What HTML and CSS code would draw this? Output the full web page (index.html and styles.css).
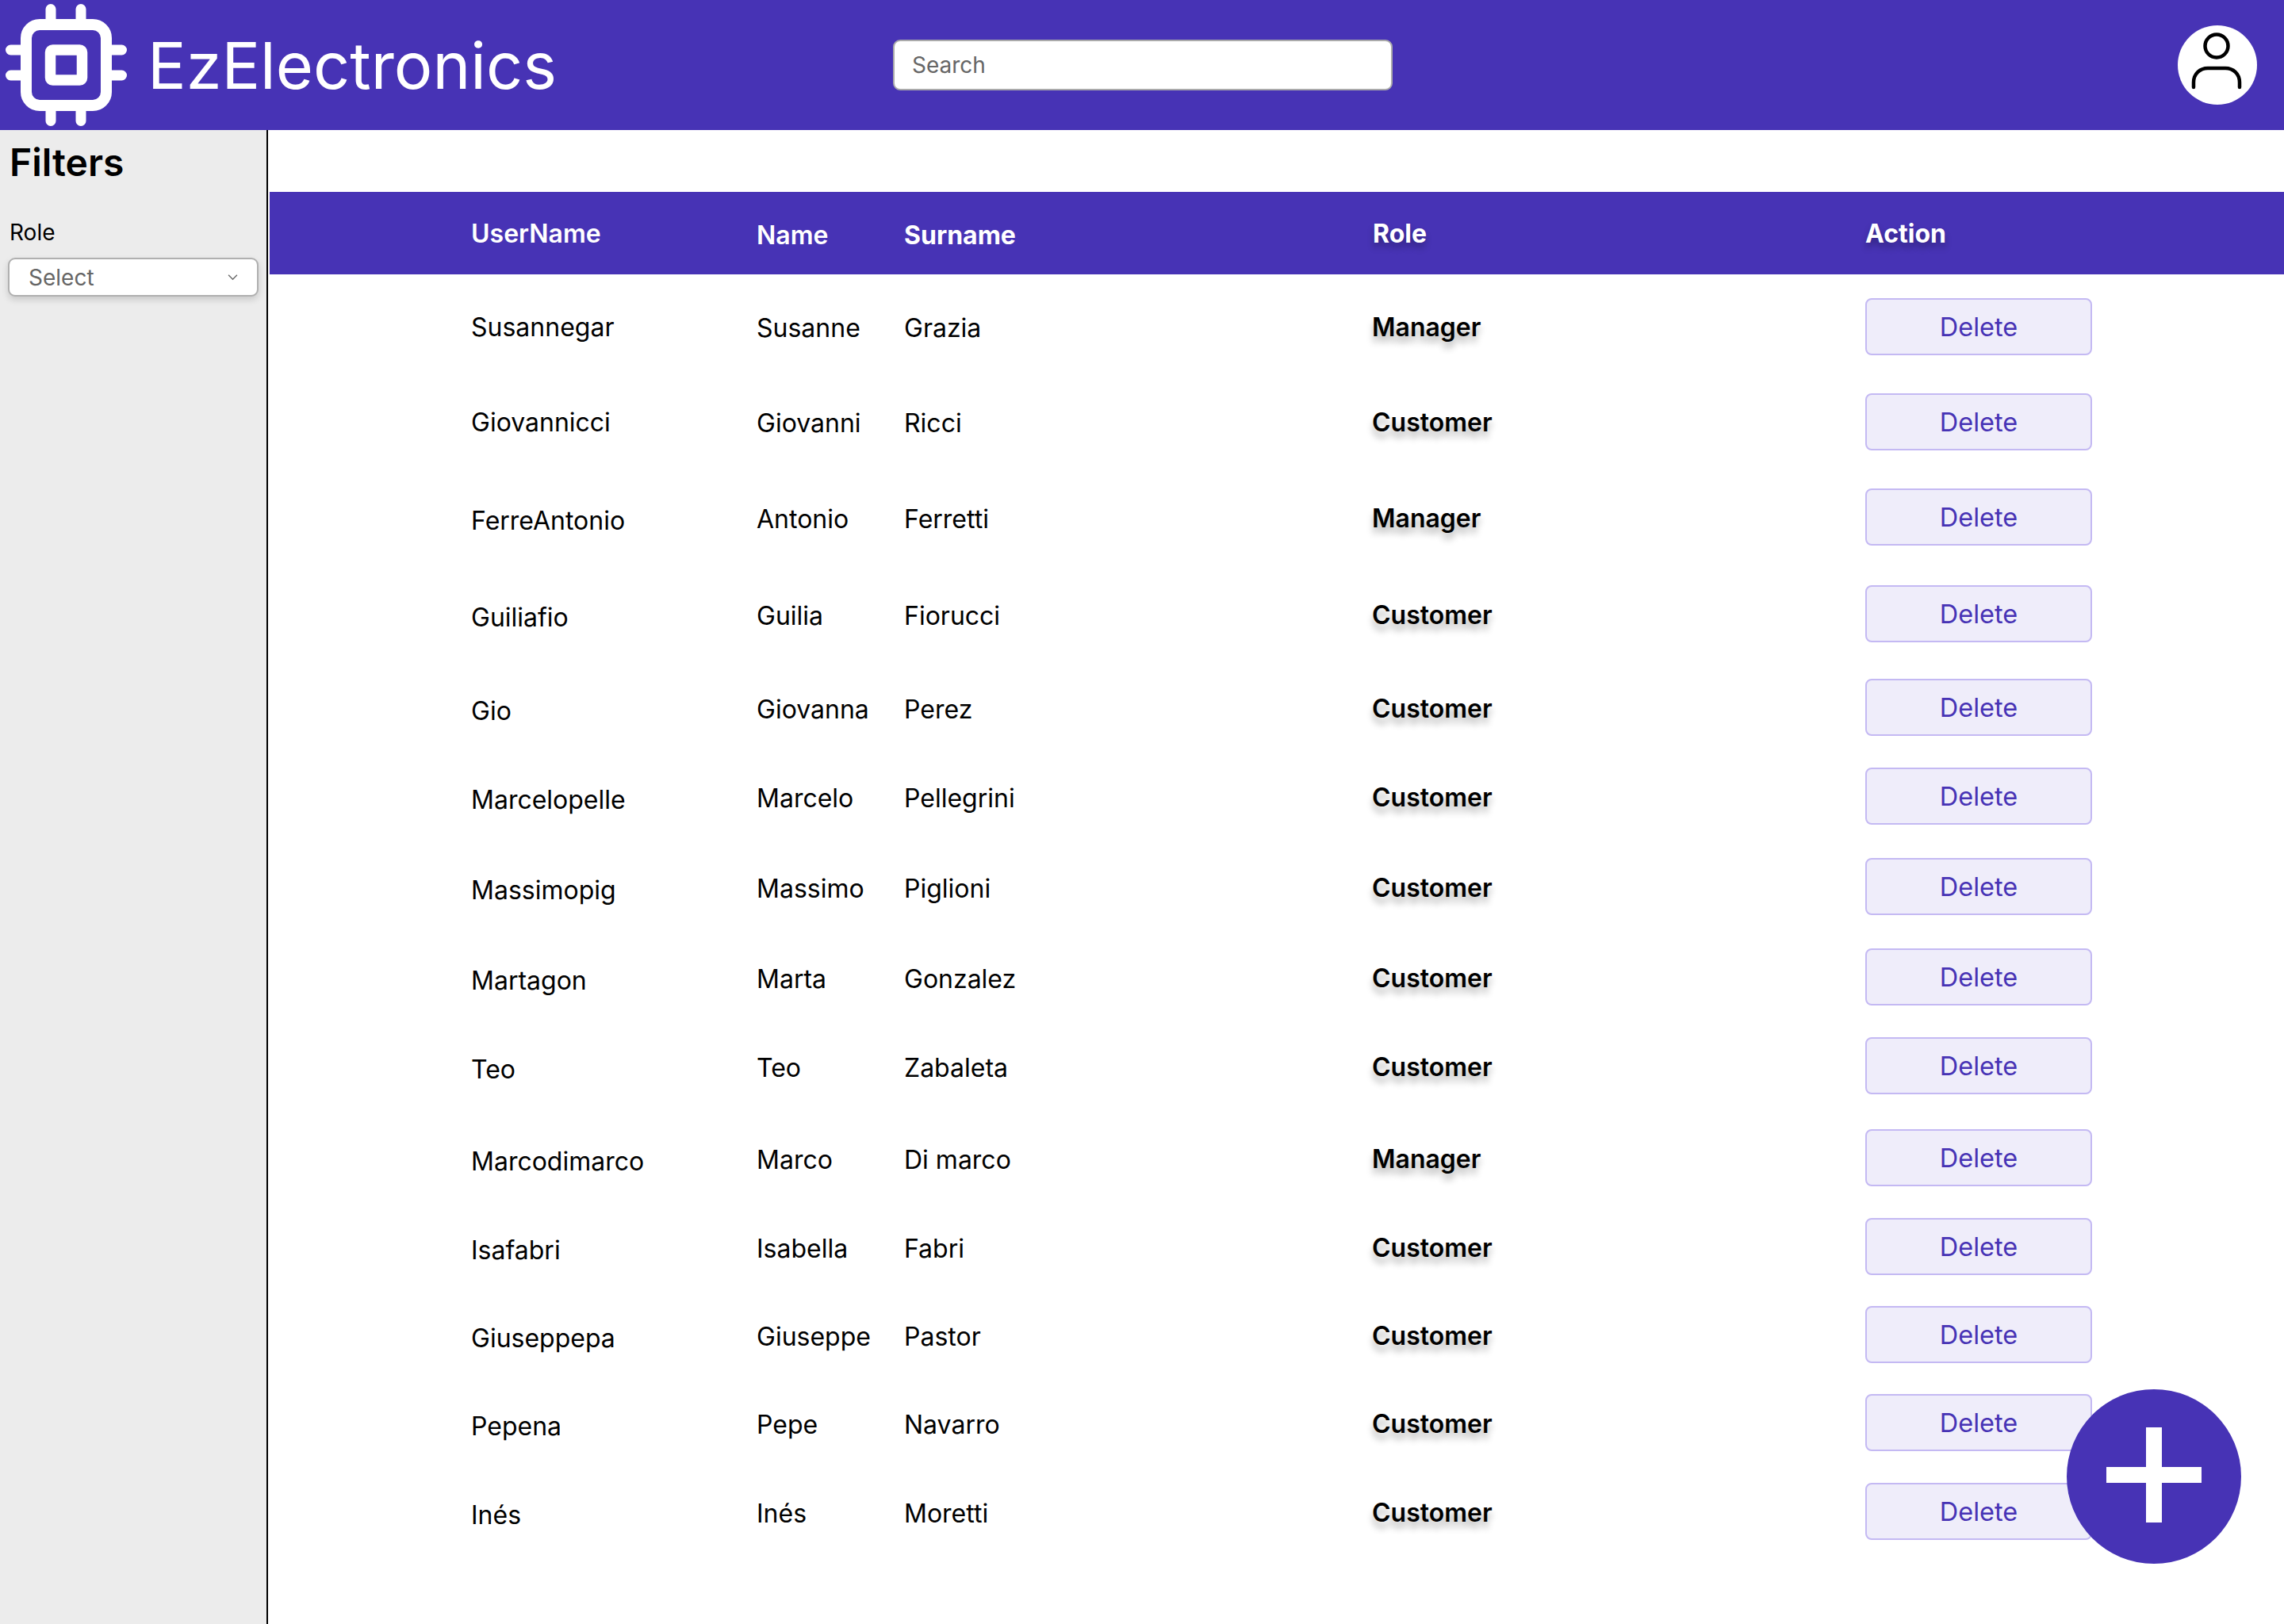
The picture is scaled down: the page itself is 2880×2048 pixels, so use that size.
FILE: index.html
```html
<!DOCTYPE html>
<html lang="en">
<head>
<meta charset="UTF-8">
<meta name="viewport" content="width=device-width, initial-scale=1.0">
<title>EzElectronics</title>
<link rel="stylesheet" href="styles.css">
</head>
<body>
    <header class="topbar">
        <div class="brand">
            <svg class="brand-logo" viewBox="0 0 168 163" fill="none">
                <g stroke="#fff" stroke-width="13" stroke-linecap="round">
                    <path d="M64 10.5V28M102 10.5V28M64 134V151.5M102 134V151.5"/>
                    <path d="M13.5 62H30M13.5 94H30M136 62H153.5M136 94H153.5"/>
                </g>
                <rect x="33" y="30" width="101" height="102" rx="17" stroke="#fff" stroke-width="14"/>
                <rect x="63.5" y="62" width="40" height="38" rx="3" stroke="#fff" stroke-width="13.5"/>
            </svg>
            <span class="brand-name">EzElectronics</span>
        </div>
        <input class="search" type="text" placeholder="Search">
        <div class="avatar">
            <svg viewBox="0 0 100 100" fill="none" stroke="#000" stroke-width="4.5" stroke-linecap="round">
                <circle cx="49" cy="26" r="14.5"/>
                <path d="M20 78V72C20 61 28 54 38 54H60C70 54 78 61 78 72V78"/>
            </svg>
        </div>
    </header>

    <div class="page">
        <aside class="sidebar">
            <h2>Filters</h2>
            <label class="filter-label">Role</label>
            <div class="select">
                <span>Select</span>
                <svg viewBox="0 0 12 8" fill="none" stroke="#666" stroke-width="1.2"><path d="M1 1.5L6 6.5L11 1.5"/></svg>
            </div>
        </aside>

        <main class="content">
            <div class="table-head">
                <span class="col-user">UserName</span>
                <span class="col-name">Name</span>
                <span class="col-surname">Surname</span>
                <span class="col-role">Role</span>
                <span class="col-action">Action</span>
            </div>
            <div class="table-body">
                <div class="row"><span class="col-user">Susannegar</span><span class="col-name">Susanne</span><span class="col-surname">Grazia</span><span class="col-role">Manager</span><button class="delete">Delete</button></div>
                <div class="row"><span class="col-user">Giovannicci</span><span class="col-name">Giovanni</span><span class="col-surname">Ricci</span><span class="col-role">Customer</span><button class="delete">Delete</button></div>
                <div class="row"><span class="col-user">FerreAntonio</span><span class="col-name">Antonio</span><span class="col-surname">Ferretti</span><span class="col-role">Manager</span><button class="delete">Delete</button></div>
                <div class="row"><span class="col-user">Guiliafio</span><span class="col-name">Guilia</span><span class="col-surname">Fiorucci</span><span class="col-role">Customer</span><button class="delete">Delete</button></div>
                <div class="row"><span class="col-user">Gio</span><span class="col-name">Giovanna</span><span class="col-surname">Perez</span><span class="col-role">Customer</span><button class="delete">Delete</button></div>
                <div class="row"><span class="col-user">Marcelopelle</span><span class="col-name">Marcelo</span><span class="col-surname">Pellegrini</span><span class="col-role">Customer</span><button class="delete">Delete</button></div>
                <div class="row"><span class="col-user">Massimopig</span><span class="col-name">Massimo</span><span class="col-surname">Piglioni</span><span class="col-role">Customer</span><button class="delete">Delete</button></div>
                <div class="row"><span class="col-user">Martagon</span><span class="col-name">Marta</span><span class="col-surname">Gonzalez</span><span class="col-role">Customer</span><button class="delete">Delete</button></div>
                <div class="row"><span class="col-user">Teo</span><span class="col-name">Teo</span><span class="col-surname">Zabaleta</span><span class="col-role">Customer</span><button class="delete">Delete</button></div>
                <div class="row"><span class="col-user">Marcodimarco</span><span class="col-name">Marco</span><span class="col-surname">Di marco</span><span class="col-role">Manager</span><button class="delete">Delete</button></div>
                <div class="row"><span class="col-user">Isafabri</span><span class="col-name">Isabella</span><span class="col-surname">Fabri</span><span class="col-role">Customer</span><button class="delete">Delete</button></div>
                <div class="row"><span class="col-user">Giuseppepa</span><span class="col-name">Giuseppe</span><span class="col-surname">Pastor</span><span class="col-role">Customer</span><button class="delete">Delete</button></div>
                <div class="row"><span class="col-user">Pepena</span><span class="col-name">Pepe</span><span class="col-surname">Navarro</span><span class="col-role">Customer</span><button class="delete">Delete</button></div>
                <div class="row"><span class="col-user">Inés</span><span class="col-name">Inés</span><span class="col-surname">Moretti</span><span class="col-role">Customer</span><button class="delete">Delete</button></div>
            </div>
        </main>
    </div>

    <button class="add-button" aria-label="Add user">
        <svg viewBox="0 0 120 120" fill="#fff"><path d="M50 0H70V50H120V70H70V120H50V70H0V50H50Z"/></svg>
    </button>
</body>
</html>
```

FILE: styles.css
```css
body {
    margin: 0;
    height: 2048px;
    overflow: hidden;
    font-family: Inter, "Liberation Sans", sans-serif;
    background: #fff;
    color: #000;
}

.topbar {
    height: 164px;
    background: #4733b5;
    display: flex;
    align-items: center;
    position: relative;
}
.brand {
    width: 1126px;
    display: flex;
    align-items: center;
    gap: 18px;
    color: #fff;
}
.brand-logo {
    width: 168px;
    height: 163px;
    flex: none;
}
.brand-name {
    margin-top: 3px;
    font-size: 81px;
    line-height: 1;
    font-weight: 400;
}
.search {
    width: 630px;
    height: 64px;
    box-sizing: border-box;
    border: 2px solid #aaa;
    border-radius: 9px;
    padding: 0 22px;
    background: #fff;
    font-family: inherit;
    font-size: 28px;
}
.search::placeholder {
    color: #666;
    opacity: 1;
}
.avatar {
    width: 100px;
    height: 100px;
    margin-left: auto;
    margin-right: 34px;
    border-radius: 50%;
    background: #fff;
}
.avatar svg {
    display: block;
    width: 100px;
    height: 100px;
}

.page {
    display: flex;
    height: 1884px;
}
.sidebar {
    width: 336px;
    box-sizing: border-box;
    background: #ececec;
    padding: 12px 10px 0;
    flex: none;
}
.sidebar h2 {
    margin: 0 0 0 2px;
    font-size: 48px;
    line-height: 58px;
    font-weight: 600;
}
.filter-label {
    display: block;
    margin: 42px 0 0 2px;
    font-size: 28px;
    line-height: 34px;
}
.select {
    margin-top: 15px;
    width: 316px;
    height: 49px;
    box-sizing: border-box;
    border: 2px solid #b0b0b0;
    border-radius: 9px;
    background: #fff;
    box-shadow: 0 4px 8px rgba(0, 0, 0, 0.15);
    display: flex;
    align-items: center;
    justify-content: space-between;
    padding: 0 24px;
    font-size: 28px;
    color: #666;
}
.select svg {
    width: 13px;
    height: 9px;
}

.content {
    flex: 1;
    border-left: 2px solid #000;
    padding-left: 2px;
    padding-top: 78px;
}
.table-head,
.row {
    display: grid;
    grid-template-columns: 360px 186px 590px 622px 286px;
    padding-left: 254px;
    align-items: center;
    font-size: 32px;
}
.table-head {
    height: 104px;
    background: #4733b5;
    color: #fff;
    font-weight: 600;
}
.table-head .col-name,
.table-head .col-surname {
    margin-top: 4px;
}
.table-head .col-surname,
.table-head .col-role,
.table-head .col-action {
    font-weight: 700;
}
.table-head .col-role,
.table-head .col-action {
    text-shadow: 0 6px 8px rgba(0, 0, 0, 0.3);
}
.table-head .col-role {
    margin-left: 1px;
}
.table-body {
    padding-top: 30px;
    display: grid;
    /* the rows in the design are not evenly spaced */
    grid-template-rows: 120px 120px 122px 118px 112px 114px 114px 112px 116px 112px 111px 111px 112px 72px;
}
.row {
    height: 72px;
}
.row .col-user {
    margin-top: 9px;
}
.row .col-name,
.row .col-surname {
    margin-top: 4px;
}
.row .col-role {
    margin-top: 2px;
    font-weight: 600;
    text-shadow: 0 8px 8px rgba(0, 0, 0, 0.3);
}
.row:nth-child(-n+2) .col-user,
.row:nth-child(-n+2) .col-role {
    margin-top: 0;
}
.row:nth-child(-n+2) .col-name,
.row:nth-child(-n+2) .col-surname {
    margin-top: 3px;
}
.delete {
    width: 286px;
    height: 72px;
    box-sizing: border-box;
    border: 2px solid #c4b9f3;
    border-radius: 8px;
    background: #efedfa;
    color: #4733b5;
    font-family: inherit;
    font-size: 32.5px;
    font-weight: 400;
}

.add-button {
    position: absolute;
    left: 2606px;
    top: 1752px;
    width: 220px;
    height: 220px;
    border: none;
    border-radius: 50%;
    background: #4733b5;
    padding: 0;
    display: flex;
    align-items: center;
    justify-content: center;
}
.add-button svg {
    width: 120px;
    height: 120px;
    margin-left: -1px;
    margin-top: -5px;
}
```
